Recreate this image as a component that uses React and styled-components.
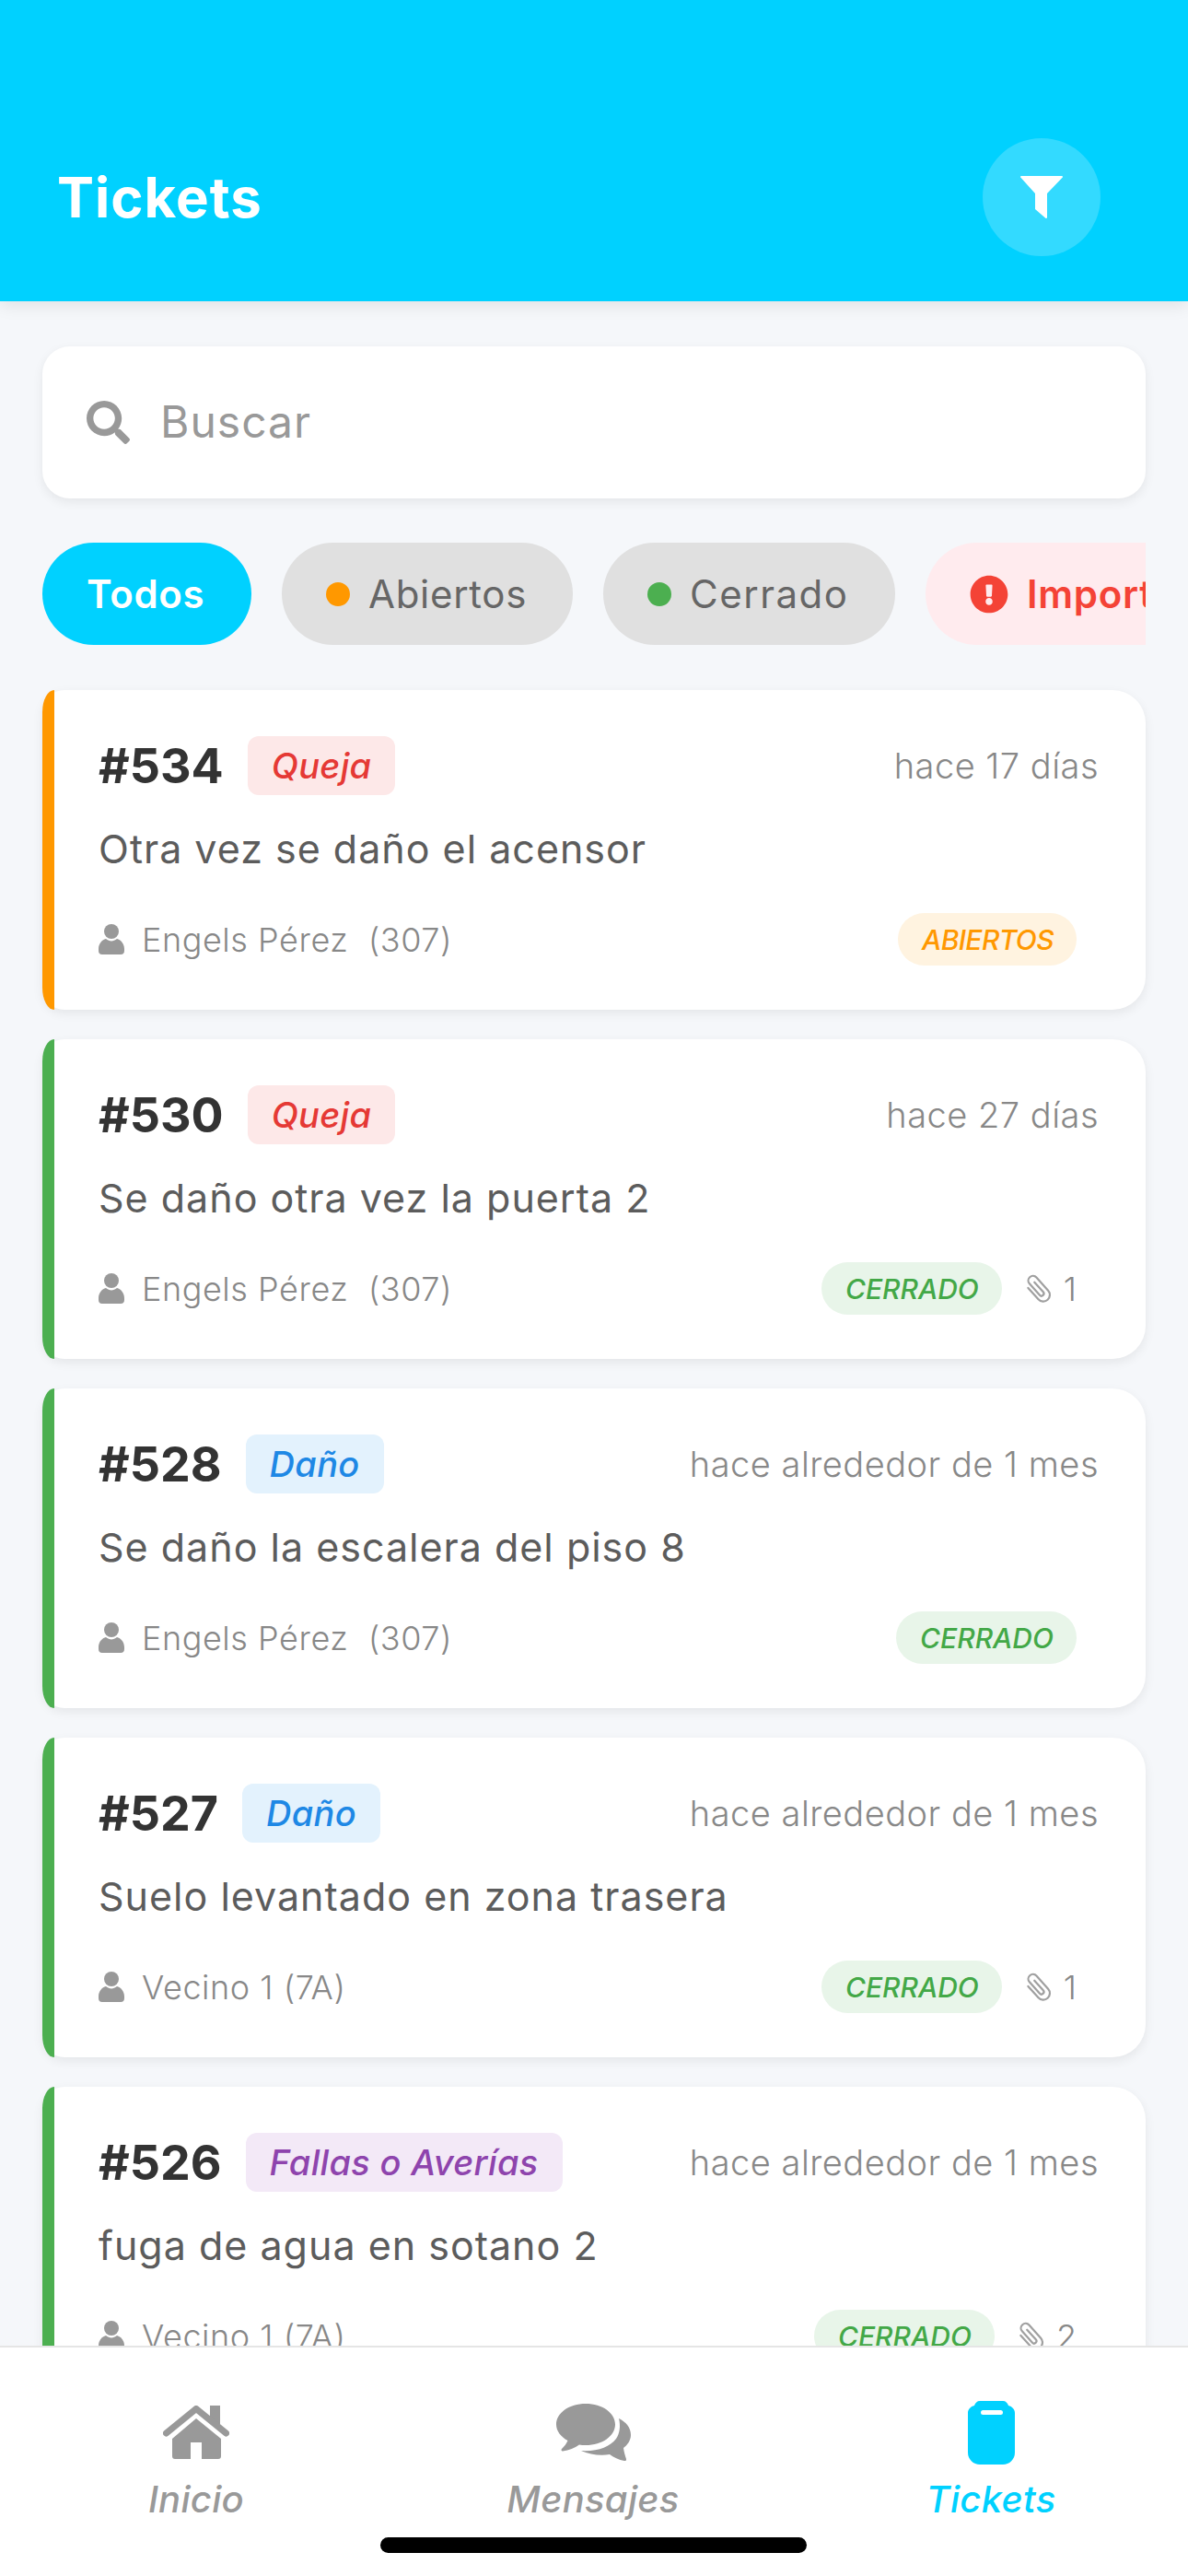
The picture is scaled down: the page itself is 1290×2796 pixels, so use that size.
import React from 'react';
import styled, { createGlobalStyle } from 'styled-components';
import { FaSearch, FaExclamationCircle } from 'react-icons/fa';

const GlobalStyle = createGlobalStyle`
    html, body {
        margin: 0;
        padding: 0;
    }
    body {
        background: #f5f7fa;
        font-family: Inter, "Open Sans", sans-serif;
    }
`;

const Page = styled.div`
    width: 1290px;
    height: 2796px;
    display: flex;
    flex-direction: column;
    overflow: hidden;
    background: #f5f7fa;
`;

const Header = styled.header`
    height: 327px;
    box-sizing: border-box;
    flex-shrink: 0;
    padding: 150px 95px 0 62px;
    display: flex;
    justify-content: space-between;
    align-items: flex-start;
    background: #00d1ff;
    box-shadow: 0 6px 16px rgba(0, 0, 0, 0.08);
    position: relative;
    z-index: 2;
`;

const Title = styled.h1`
    margin: 0;
    height: 128px;
    line-height: 128px;
    font-size: 60px;
    font-weight: 700;
    letter-spacing: 1px;
    color: #fff;
`;

const FilterButton = styled.button`
    width: 128px;
    height: 128px;
    border: 0;
    padding: 0;
    border-radius: 50%;
    background: rgba(255, 255, 255, 0.2);
    color: #fff;
    display: flex;
    align-items: center;
    justify-content: center;
`;

const Main = styled.main`
    flex: 1;
    min-height: 0;
    overflow: hidden;
    padding: 49px 46px 0;
`;

const SearchBox = styled.div`
    height: 165px;
    box-sizing: border-box;
    padding-left: 48px;
    display: flex;
    align-items: center;
    gap: 35px;
    background: #fff;
    border-radius: 30px;
    box-shadow: 0 4px 12px rgba(0, 0, 0, 0.07);
    color: #999;
    font-size: 47px;
`;

const SearchText = styled.span`
    margin: -3px 0 0 -2px;
    font-size: 48px;
    letter-spacing: 1px;
    color: #999;
`;

const ChipRow = styled.div`
    margin-top: 48px;
    display: flex;
    gap: 33px;
    overflow: hidden;
`;

const FilterChip = styled.div`
    width: ${p => p.$width}px;
    height: 111px;
    box-sizing: border-box;
    flex-shrink: 0;
    padding-left: 48px;
    display: flex;
    align-items: center;
    gap: 20px;
    border-radius: 56px;
    font-size: 42px;
    font-weight: ${p => (p.$strong ? 600 : 400)};
    letter-spacing: ${p => p.$track || 0.7}px;
    background: ${p => p.$bg};
    color: ${p => p.$color};
    white-space: nowrap;
`;

const Dot = styled.span`
    width: 26px;
    height: 26px;
    flex-shrink: 0;
    border-radius: 50%;
    background: ${p => p.$color};
`;

const List = styled.div`
    margin-top: 49px;
    display: flex;
    flex-direction: column;
    gap: 32px;
`;

const Card = styled.article`
    height: 347px;
    flex-shrink: 0;
    box-sizing: border-box;
    padding: 50px 51px 0 61px;
    position: relative;
    background: #fff;
    border-radius: 24px 36px 36px 24px;
    box-shadow: 0 4px 12px rgba(0, 0, 0, 0.07);

    &::before {
        content: '';
        position: absolute;
        left: 0;
        top: 0;
        bottom: 0;
        width: 13px;
        border-radius: 13px 0 0 13px / 24px 0 0 24px;
        background: ${p => p.$accent};
    }
`;

const CardTop = styled.div`
    display: flex;
    align-items: center;
    height: 64px;
`;

const TicketId = styled.span`
    font-size: 52px;
    font-weight: 700;
    color: #333;
`;

const TypeChip = styled.span`
    margin-left: 26px;
    height: 64px;
    padding: 0 26px;
    display: flex;
    align-items: center;
    border-radius: 12px;
    font-size: 38px;
    font-weight: 500;
    font-style: italic;
    letter-spacing: 0.3px;
    background: ${p => p.$bg};
    color: ${p => p.$color};
`;

const TimeAgo = styled.span`
    margin-left: auto;
    font-size: 38px;
    font-weight: 300;
    letter-spacing: 0.5px;
    color: #888;
`;

const Description = styled.p`
    margin: 27px 0 38px;
    line-height: 63px;
    font-size: 43px;
    letter-spacing: 1px;
    color: #5c5c5c;
`;

const CardBottom = styled.div`
    height: 57px;
    padding-right: 24px;
    display: flex;
    align-items: center;
`;

const Author = styled.span`
    display: flex;
    align-items: center;
    gap: 19px;
    font-size: 36px;
    font-weight: 300;
    letter-spacing: 0.55px;
    color: #888;
    white-space: pre;
`;

const StatusPill = styled.span`
    margin-left: auto;
    height: 57px;
    padding: 0 25px 0 26px;
    display: flex;
    align-items: center;
    border-radius: 29px;
    font-size: 30px;
    font-weight: 500;
    font-style: italic;
    letter-spacing: ${p => p.$track}px;
    background: ${p => p.$bg};
    color: ${p => p.$color};
`;

const Attachment = styled.span`
    margin-left: 20px;
    display: flex;
    align-items: center;
    gap: 9px;
    font-size: 36px;
    font-weight: 300;
    color: #888;
`;

const TabBar = styled.nav`
    height: 250px;
    flex-shrink: 0;
    box-sizing: border-box;
    padding-top: 57px;
    display: grid;
    grid-template-columns: 426px 436px 428px;
    background: #fff;
    border-top: 2px solid #e5e5e5;
    position: relative;
    z-index: 2;
`;

const Tab = styled.div`
    display: flex;
    flex-direction: column;
    align-items: center;
    color: ${p => (p.$active ? '#00d1ff' : '#999')};
`;

const TabIcon = styled.div`
    height: 70px;
    display: flex;
    align-items: center;
    justify-content: center;
`;

const TabLabel = styled.span`
    margin-top: 13px;
    font-size: 40px;
    font-weight: 500;
    font-style: italic;
    letter-spacing: 0.3px;
`;

const HomeBar = styled.div`
    position: absolute;
    left: 413px;
    bottom: 25px;
    width: 463px;
    height: 17px;
    border-radius: 9px;
    background: #000;
`;

const FunnelIcon = () => (
    <svg width="46" height="46" viewBox="0 0 46 46" fill="currentColor">
        <path d="M1 0H45a1 1 0 0 1 .8 1.6L29 19V45a1 1 0 0 1-1.7.7L16 36V19L.2 1.6A1 1 0 0 1 1 0Z" />
    </svg>
);

const PersonIcon = () => (
    <svg width="28" height="33" viewBox="0 0 28 33" fill="#999">
        <circle cx="14" cy="8" r="8" />
        <path d="M0 27C0 21 4 17 8 16C10 17.6 12 18.4 14 18.4C16 18.4 18 17.6 20 16C24 17 28 21 28 27V29a4 4 0 0 1-4 4H4a4 4 0 0 1-4-4Z" />
    </svg>
);

const ClipIcon = () => (
    <svg width="38" height="38" viewBox="0 0 24 24" fill="none" stroke="#a0a0a0" strokeWidth="1.4" strokeLinecap="round">
        <path transform="rotate(-42 12 12)" d="M7.5 7v10.5a4.5 4.5 0 0 0 9 0V5.5a3.2 3.2 0 0 0-6.4 0V16a1.6 1.6 0 0 0 3.2 0V7" />
    </svg>
);

const HouseIcon = () => (
    <svg width="72" height="58" viewBox="0 0 72 58" fill="currentColor">
        <path d="M51 0H62V20H51Z" />
        <path d="M3.5 30L36 3.5L68.500 30" fill="none" stroke="currentColor" strokeWidth="7" strokeLinecap="round" strokeLinejoin="round" />
        <path d="M36 14L63 36V55a3 3 0 0 1-3 3H42V40H30V58H13a3 3 0 0 1-3-3V36Z" />
    </svg>
);

const BubblesIcon = () => (
    <svg width="81" height="62" viewBox="0 0 81 62" fill="currentColor">
        <path d="M32 0C50 0 64 10 64 22.500C64 35 50 45 32 45C29 45 27 44.800 25 44.400C20 48 14 50.500 7 51.500C5.500 51.600 5 50 6 49C8.500 46.500 11 43.500 12.500 40C5 36 0 29.500 0 22.500C0 10 14 0 32 0Z" />
        <path d="M68 16C76 20 81 26 81 34C81 40 77 45 73 48C73.500 52 75 57 76 60C76.500 62 75 62 74 62C68 61 62 58 58 55C48 57 36 55 27 51C45 52 58 47 65 38C69 32 70 24 68 16Z" />
    </svg>
);

const BoardIcon = () => (
    <svg width="51" height="69" viewBox="0 0 51 69" fill="currentColor">
        <path fillRule="evenodd" d="M13 0H38C41 0 43 2 44 5C48 6 51 9 51 13V56a13 13 0 0 1-13 13H13A13 13 0 0 1 0 56V13C0 9 3 6 7 5C8 2 10 0 13 0ZM16.500 10a2.500 2.500 0 0 0 0 5H35.500a2.500 2.500 0 0 0 0-5Z" />
    </svg>
);

const typeColors = {
    Queja: { bg: '#fde8e8', color: '#e53935' },
    'Daño': { bg: '#e3f2fd', color: '#1e88e5' },
    'Fallas o Averías': { bg: '#f3e9f7', color: '#8e44ad' },
};

const statusColors = {
    ABIERTOS: { accent: '#ff9800', bg: '#fff3e0', color: '#ff9800', track: -0.6 },
    CERRADO: { accent: '#4caf50', bg: '#e8f5e9', color: '#43a847', track: 0 },
};

const tickets = [
    { id: 534, type: 'Queja', time: 'hace 17 días', text: 'Otra vez se daño el acensor', author: 'Engels Pérez  (307)', status: 'ABIERTOS' },
    { id: 530, type: 'Queja', time: 'hace 27 días', text: 'Se daño otra vez la puerta 2', author: 'Engels Pérez  (307)', status: 'CERRADO', files: 1 },
    { id: 528, type: 'Daño', time: 'hace alrededor de 1 mes', text: 'Se daño la escalera del piso 8', author: 'Engels Pérez  (307)', status: 'CERRADO' },
    { id: 527, type: 'Daño', time: 'hace alrededor de 1 mes', text: 'Suelo levantado en zona trasera', author: 'Vecino 1 (7A)', status: 'CERRADO', files: 1 },
    { id: 526, type: 'Fallas o Averías', time: 'hace alrededor de 1 mes', text: 'fuga de agua en sotano 2', author: 'Vecino 1 (7A)', status: 'CERRADO', files: 2 },
];

const App = () => (
    <Page>
        <GlobalStyle />
        <Header>
            <Title>Tickets</Title>
            <FilterButton><FunnelIcon /></FilterButton>
        </Header>
        <Main>
            <SearchBox>
                <FaSearch />
                <SearchText>Buscar</SearchText>
            </SearchBox>
            <ChipRow>
                <FilterChip $width={227} $bg="#00d1ff" $color="#fff" $strong>Todos</FilterChip>
                <FilterChip $width={316} $bg="#e0e0e0" $color="#666"><Dot $color="#ff9800" />Abiertos</FilterChip>
                <FilterChip $width={317} $track={1.5} $bg="#e0e0e0" $color="#666"><Dot $color="#4caf50" />Cerrado</FilterChip>
                <FilterChip $width={400} $bg="#ffebee" $color="#f44336" $strong><FaExclamationCircle />Importantes</FilterChip>
            </ChipRow>
            <List>
                {tickets.map(ticket => {
                    const status = statusColors[ticket.status];
                    return (
                        <Card key={ticket.id} $accent={status.accent}>
                            <CardTop>
                                <TicketId>#{ticket.id}</TicketId>
                                <TypeChip $bg={typeColors[ticket.type].bg} $color={typeColors[ticket.type].color}>{ticket.type}</TypeChip>
                                <TimeAgo>{ticket.time}</TimeAgo>
                            </CardTop>
                            <Description>{ticket.text}</Description>
                            <CardBottom>
                                <Author><PersonIcon />{ticket.author}</Author>
                                <StatusPill $bg={status.bg} $color={status.color} $track={status.track}>{ticket.status}</StatusPill>
                                {ticket.files && <Attachment><ClipIcon />{ticket.files}</Attachment>}
                            </CardBottom>
                        </Card>
                    );
                })}
            </List>
        </Main>
        <TabBar>
            <Tab><TabIcon><HouseIcon /></TabIcon><TabLabel>Inicio</TabLabel></Tab>
            <Tab><TabIcon><BubblesIcon /></TabIcon><TabLabel>Mensajes</TabLabel></Tab>
            <Tab $active><TabIcon><BoardIcon /></TabIcon><TabLabel>Tickets</TabLabel></Tab>
            <HomeBar />
        </TabBar>
    </Page>
);

export default App;
